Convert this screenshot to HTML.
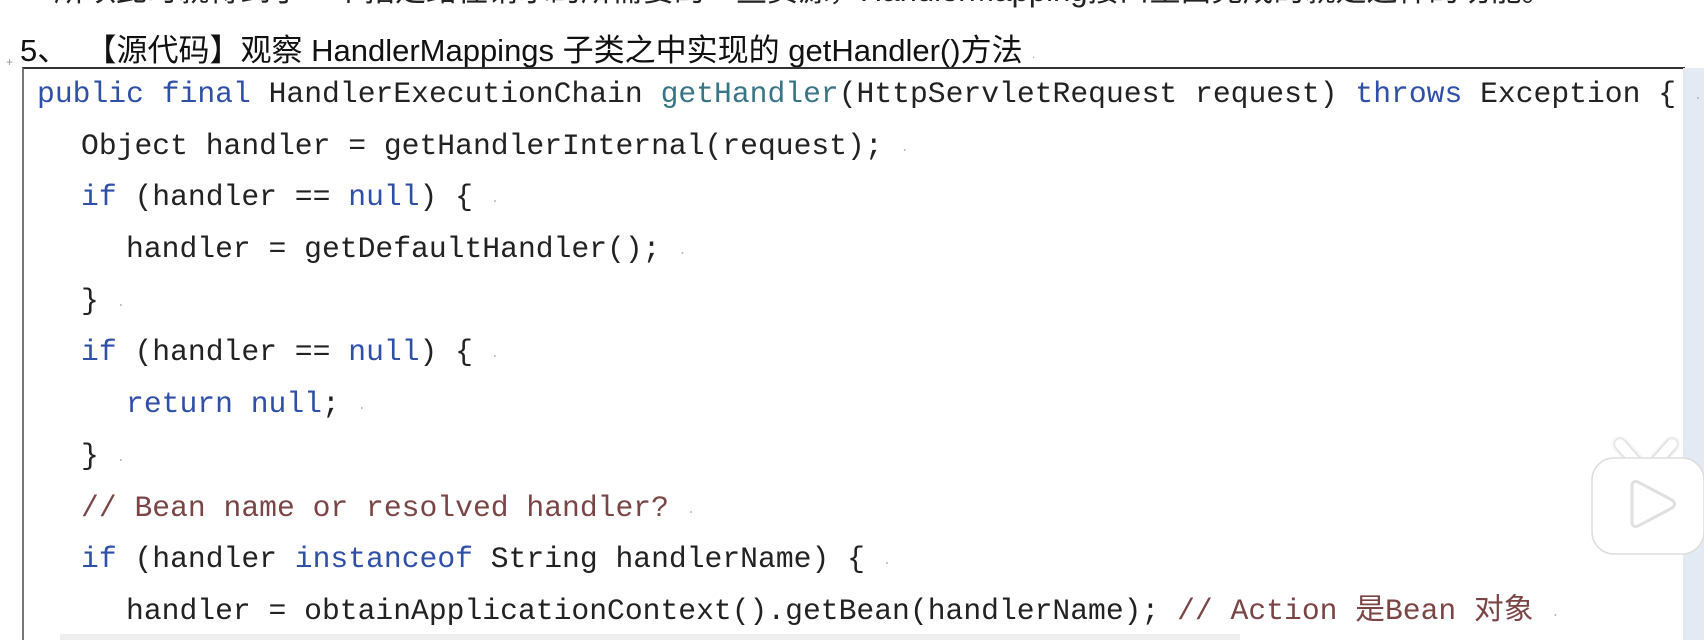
<!DOCTYPE html>
<html><head><meta charset="utf-8"><style>
html,body{margin:0;width:1704px;height:640px;overflow:hidden}
body{background:#fff;position:relative;font-family:"Liberation Sans","Noto Sans CJK SC",sans-serif}
.top{position:absolute;left:54px;top:-35px;font-size:31px;color:#222;white-space:nowrap}
.h{position:absolute;left:20px;top:25px;font-size:31px;color:#111;white-space:nowrap}
.box{position:absolute;left:22px;top:67px;width:1661px;height:580px;border-top:2px solid #333;border-left:2px solid #777;background:#fff}
.strip{position:absolute;left:1683px;top:68px;width:21px;height:572px;background:#e3eaf4}
.code{position:absolute;left:37px;top:74px;font-family:"Liberation Mono","Noto Sans CJK SC",monospace;font-size:29.7px;color:#222}
.l{height:51.7px;line-height:40px;white-space:pre}
.k{color:#3050a8}.f{color:#3a7585}.c{color:#7b4545}
.d{color:#bbb;font-size:14px}
.i1{padding-left:44px}.i2{padding-left:89px}
.plus{position:absolute;left:6px;top:55px;font-size:12px;color:#999}
</style></head><body>
<div class="top">所以此时就得到了一个指定路径请求的所需要的一些资源，HandlerMapping接口里面完成的就是这样的功能。</div>
<div class="h">5、&nbsp;&nbsp;【源代码】观察 HandlerMappings 子类之中实现的 getHandler()方法 <span style="color:#bbb;font-size:14px">·</span></div>
<div class="plus">+</div>
<div class="box"></div>
<div class="strip"></div>
<div class="code"><div class="l"><span class="k">public final</span> HandlerExecutionChain <span class="f">getHandler</span>(HttpServletRequest request) <span class="k">throws</span> Exception { <span class="d">·</span></div><div class="l i1">Object handler = getHandlerInternal(request); <span class="d">·</span></div><div class="l i1"><span class="k">if</span> (handler == <span class="k">null</span>) { <span class="d">·</span></div><div class="l i2">handler = getDefaultHandler(); <span class="d">·</span></div><div class="l i1">} <span class="d">·</span></div><div class="l i1"><span class="k">if</span> (handler == <span class="k">null</span>) { <span class="d">·</span></div><div class="l i2"><span class="k">return null</span>; <span class="d">·</span></div><div class="l i1">} <span class="d">·</span></div><div class="l i1"><span class="c">// Bean name or resolved handler?</span> <span class="d">·</span></div><div class="l i1"><span class="k">if</span> (handler <span class="k">instanceof</span> String handlerName) { <span class="d">·</span></div><div class="l i2">handler = obtainApplicationContext().getBean(handlerName); <span class="c">// Action 是Bean 对象</span> <span class="d">·</span></div></div>
<div style="position:absolute;left:60px;top:634px;width:1180px;height:6px;background:#eee"></div>
<svg style="position:absolute;left:1590px;top:436px" width="114" height="122" viewBox="0 0 114 122">
<path d="M30 8 L46 26 M82 8 L66 26" stroke="#fff" stroke-width="10" stroke-linecap="round" filter="drop-shadow(0 0 2px #aaa)"/>
<rect x="2" y="22" width="112" height="96" rx="22" fill="#fff" stroke="#ddd" stroke-width="1.5"/>
<path d="M42 50 Q42 44 48 46 L82 64 Q87 68 82 72 L48 90 Q42 92 42 86 Z" fill="#fff" stroke="#e0e0e0" stroke-width="3"/>
</svg>
</body></html>
